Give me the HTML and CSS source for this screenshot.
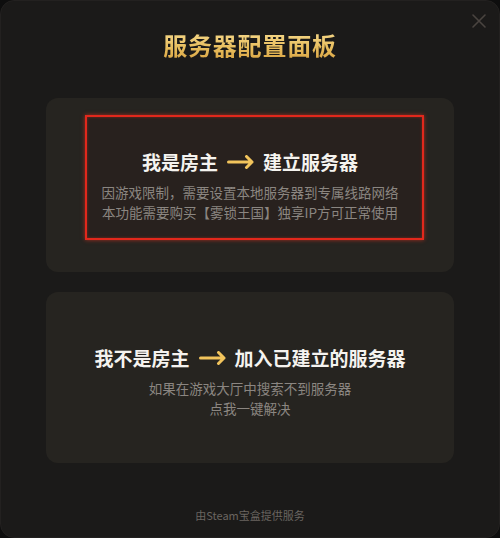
FILE: index.html
```html
<!DOCTYPE html>
<html lang="zh-CN">
<head>
<meta charset="utf-8">
<title>服务器配置面板</title>
<link rel="stylesheet" href="styles.css">
</head>
<body>
<div class="panel">
  <button class="close" aria-label="关闭">
    <svg width="16" height="16" viewBox="0 0 16 16"><path d="M2 2L14 14M14 2L2 14" stroke="#4a4440" stroke-width="1.6" stroke-linecap="round"/></svg>
  </button>
  <h1 class="title">服务器配置面板</h1>
  <div class="cards">
    <div class="card card-host">
      <div class="highlight"></div>
      <div class="heading">
        <span>我是房主</span>
        <svg class="arrow" width="27" height="14" viewBox="0 0 27 14"><path d="M1.5 7H25M19.5 1.5L25 7L19.5 12.5" fill="none" stroke="#f2c45c" stroke-width="3" stroke-linecap="round" stroke-linejoin="round"/></svg>
        <span>建立服务器</span>
      </div>
      <p class="desc">因游戏限制，需要设置本地服务器到专属线路网络<br>本功能需要购买【雾锁王国】独享IP方可正常使用</p>
    </div>
    <div class="card card-join">
      <div class="heading">
        <span>我不是房主</span>
        <svg class="arrow" width="27" height="14" viewBox="0 0 27 14"><path d="M1.5 7H25M19.5 1.5L25 7L19.5 12.5" fill="none" stroke="#f2c45c" stroke-width="3" stroke-linecap="round" stroke-linejoin="round"/></svg>
        <span>加入已建立的服务器</span>
      </div>
      <p class="desc">如果在游戏大厅中搜索不到服务器<br>点我一键解决</p>
    </div>
  </div>
  <div class="footer">由Steam宝盒提供服务</div>
</div>
</body>
</html>
```

FILE: styles.css
```css
* { box-sizing: border-box; }
html, body { margin: 0; padding: 0; }
body {
  background: #0e0e0e;
  font-family: "Noto Sans CJK SC", "Noto Sans", sans-serif;
}
.panel {
  position: relative;
  width: 500px;
  height: 538px;
  background: #1b1a19;
  border-radius: 14px;
  border: 1px solid #232120;
  padding: 28px 45px 14px;
  display: flex;
  flex-direction: column;
}
.close {
  position: absolute;
  top: 12px;
  right: 12px;
  width: 16px;
  height: 16px;
  padding: 0;
  border: 0;
  background: none;
  display: flex;
}
.title {
  margin: 0;
  text-align: center;
  font-size: 24px;
  line-height: 32px;
  font-weight: 700;
  letter-spacing: 0.8px;
  background: linear-gradient(180deg, #f7dc92 0%, #e8bd5c 60%, #d9a444 100%);
  -webkit-background-clip: text;
  background-clip: text;
  color: transparent;
}
.cards {
  margin-top: 37px;
  display: flex;
  flex-direction: column;
  gap: 20px;
}
.card {
  position: relative;
  background: #262420;
  border-radius: 12px;
  text-align: center;
}
.card-host { height: 174px; padding-top: 52px; }
.card-join { height: 171px; padding-top: 54px; }
.highlight {
  position: absolute;
  left: 39px;
  right: 30px;
  top: 17px;
  bottom: 32px;
  border: 2.5px solid #e2281c;
  background: rgba(60, 20, 15, 0.12);
  box-shadow: 0 0 4px rgba(255, 50, 30, 0.6), inset 0 0 3px rgba(255, 50, 30, 0.4);
}
.heading {
  position: relative;
  display: flex;
  justify-content: center;
  align-items: center;
  gap: 9px;
  color: #f5f3ef;
  font-size: 19px;
  line-height: 24px;
  font-weight: 700;
}
.arrow { display: block; }
.desc {
  position: relative;
  margin: 8px 0 0;
  color: #8b8681;
  font-size: 13.5px;
  line-height: 20px;
}
.footer {
  margin-top: auto;
  text-align: center;
  color: #6a6560;
  font-size: 11px;
  line-height: 16px;
}
```
